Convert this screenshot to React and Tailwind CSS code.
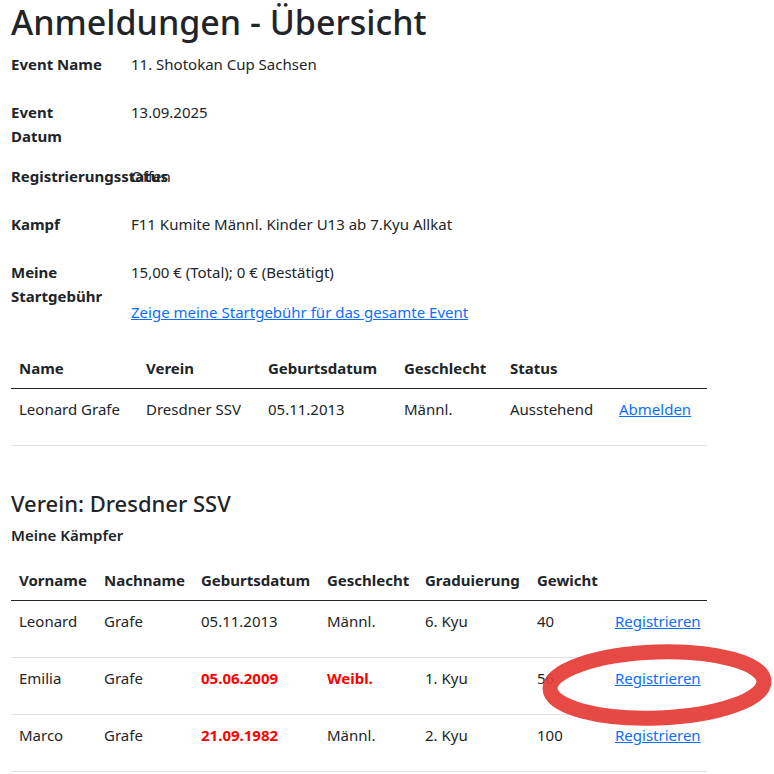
import React from 'react';

const font = { fontFamily: '"Segoe UI", "Noto Sans", "Open Sans", sans-serif' };

const details = [
  { label: 'Event Name', value: '11. Shotokan Cup Sachsen', h: 'h-[48px]' },
  { label: 'Event Datum', value: '13.09.2025', h: 'h-[64px]' },
  { label: 'Registrierungsstatus', value: 'Offen', h: 'h-[48px]' },
  { label: 'Kampf', value: 'F11 Kumite Männl. Kinder U13 ab 7.Kyu Allkat', h: 'h-[48px]' },
];

const fighters = [
  { vorname: 'Leonard', nachname: 'Grafe', geb: '05.11.2013', gebRed: false, sex: 'Männl.', sexRed: false, grad: '6. Kyu', weight: '40' },
  { vorname: 'Emilia', nachname: 'Grafe', geb: '05.06.2009', gebRed: true, sex: 'Weibl.', sexRed: true, grad: '1. Kyu', weight: '56' },
  { vorname: 'Marco', nachname: 'Grafe', geb: '21.09.1982', gebRed: true, sex: 'Männl.', sexRed: false, grad: '2. Kyu', weight: '100' },
];

export default function App() {
  return (
    <div className="relative min-h-screen bg-white text-[#212529] text-[15px] leading-[24px] pl-[11px]" style={font}>
      {/* Kopf */}
      <h1 className="h-[52px] text-[34px] leading-[44px] font-medium">Anmeldungen - Übersicht</h1>

      <dl>
        {details.map((d) => (
          <div key={d.label} className={`flex ${d.h}`}>
            <dt className="w-[120px] shrink-0 font-bold whitespace-nowrap">
              {d.label === 'Event Datum' ? (
                <>Event<br />Datum</>
              ) : (
                d.label
              )}
            </dt>
            <dd>{d.value}</dd>
          </div>
        ))}
        <div className="flex h-[88px]">
          <dt className="w-[120px] shrink-0 font-bold">
            Meine<br />Startgebühr
          </dt>
          <dd>
            <p className="mb-4">15,00 € (Total); 0 € (Bestätigt)</p>
            <a href="#" className="text-[#0d6efd] underline">Zeige meine Startgebühr für das gesamte Event</a>
          </dd>
        </div>
      </dl>

      {/* Eigene Anmeldung */}
      <table className="w-[696px] border-collapse text-left table-fixed">
        <thead>
          <tr className="border-b border-[#212529]">
            <th className="w-[127px] px-2 h-[40px] font-bold">Name</th>
            <th className="w-[122px] px-2 font-bold">Verein</th>
            <th className="w-[136px] px-2 font-bold">Geburtsdatum</th>
            <th className="w-[106px] px-2 font-bold">Geschlecht</th>
            <th className="w-[109px] px-2 font-bold">Status</th>
            <th className="px-2"></th>
          </tr>
        </thead>
        <tbody>
          <tr className="border-b border-[#dee2e6]">
            <td className="px-2 pt-2 pb-6 align-top">Leonard Grafe</td>
            <td className="px-2 pt-2 pb-6 align-top">Dresdner SSV</td>
            <td className="px-2 pt-2 pb-6 align-top">05.11.2013</td>
            <td className="px-2 pt-2 pb-6 align-top">Männl.</td>
            <td className="px-2 pt-2 pb-6 align-top">Ausstehend</td>
            <td className="px-2 pt-2 pb-6 align-top">
              <a href="#" className="text-[#0d6efd] underline">Abmelden</a>
            </td>
          </tr>
        </tbody>
      </table>

      {/* Verein */}
      <h3 className="mt-[44px] text-[22px] leading-[27px] font-medium">Verein: Dresdner SSV</h3>
      <h6 className="mt-[6px] text-[15px] leading-[24px] font-semibold">Meine Kämpfer</h6>

      <table className="mt-[14px] w-[696px] border-collapse text-left table-fixed">
        <thead>
          <tr className="border-b border-[#212529]">
            <th className="w-[85px] px-2 h-[40px] font-bold">Vorname</th>
            <th className="w-[97px] px-2 font-bold">Nachname</th>
            <th className="w-[126px] px-2 font-bold">Geburtsdatum</th>
            <th className="w-[98px] px-2 font-bold">Geschlecht</th>
            <th className="w-[112px] px-2 font-bold">Graduierung</th>
            <th className="w-[78px] px-2 font-bold">Gewicht</th>
            <th className="px-2"></th>
          </tr>
        </thead>
        <tbody>
          {fighters.map((f) => (
            <tr key={f.vorname} className="border-b border-[#dee2e6]">
              <td className="px-2 pt-2 pb-6 align-top">{f.vorname}</td>
              <td className="px-2 pt-2 pb-6 align-top">{f.nachname}</td>
              <td className={`px-2 pt-2 pb-6 align-top ${f.gebRed ? 'text-[#ff0000] font-bold' : ''}`}>{f.geb}</td>
              <td className={`px-2 pt-2 pb-6 align-top ${f.sexRed ? 'text-[#ff0000] font-bold' : ''}`}>{f.sex}</td>
              <td className="px-2 pt-2 pb-6 align-top">{f.grad}</td>
              <td className="px-2 pt-2 pb-6 align-top">{f.weight}</td>
              <td className="px-2 pt-2 pb-6 align-top">
                <a href="#" className="text-[#0d6efd] underline">Registrieren</a>
              </td>
            </tr>
          ))}
        </tbody>
      </table>

      {/* Markierung */}
      <svg className="absolute left-[530px] top-[634px] pointer-events-none" width="244" height="100" viewBox="0 0 244 100">
        <ellipse cx="127" cy="51" rx="107" ry="33" fill="none" stroke="#e53935" strokeOpacity="0.92" strokeWidth="15" transform="rotate(-2 127 51)" />
      </svg>
    </div>
  );
}
